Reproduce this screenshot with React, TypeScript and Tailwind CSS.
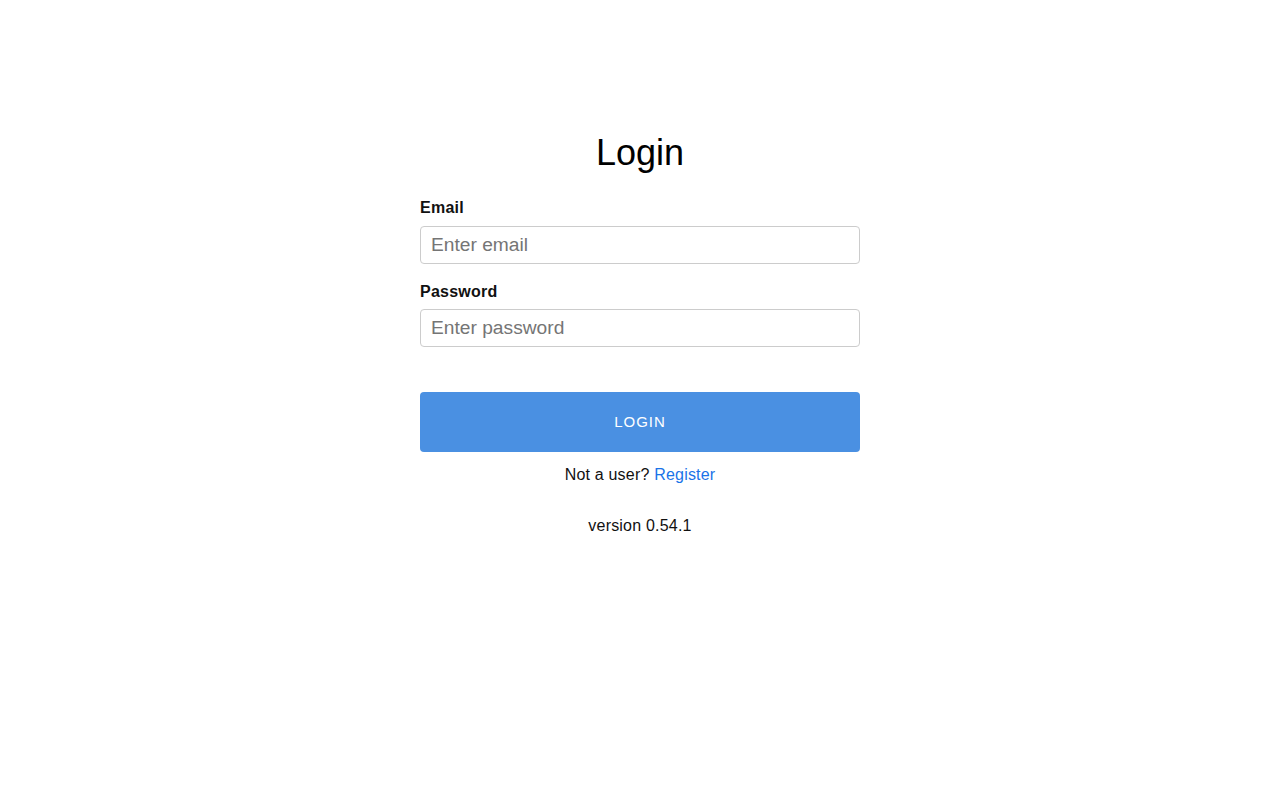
import React from 'react';

const App: React.FC = () => {
  return (
    <div className="min-h-screen bg-white font-['Liberation_Sans',Arial,sans-serif] text-black">
      <div className="mx-auto w-[440px] pt-[131px]">
        <h1 className="text-center text-[36px] leading-[43px] font-normal">Login</h1>

        <form className="mt-[21px] flex flex-col" onSubmit={(e) => e.preventDefault()}>
          <label className="pt-[1px] text-[16px] leading-[24px] font-bold tracking-[0.25px] text-[#111]">Email</label>
          <input
            type="email"
            placeholder="Enter email"
            className="mt-[6px] h-[38px] w-full rounded-[4px] border border-[#ccc] px-[10px] text-[19.2px] placeholder:text-[#757575] outline-none"
          />

          <label className="mt-[16px] text-[16px] leading-[24px] font-bold tracking-[0.25px] text-[#111]">Password</label>
          <input
            type="password"
            placeholder="Enter password"
            className="mt-[5px] h-[38px] w-full rounded-[4px] border border-[#ccc] px-[10px] text-[19.2px] placeholder:text-[#757575] outline-none"
          />

          <button
            type="submit"
            className="mt-[45px] h-[60px] w-full rounded-[4px] bg-[#4a90e2] text-[15px] tracking-[1px] text-white"
          >
            LOGIN
          </button>
        </form>

        <p className="mt-[11px] text-center text-[16px] leading-[24px] tracking-[0.2px] text-[#111]">
          Not a user? <a href="#" className="text-[#1a73e8]">Register</a>
        </p>

        <p className="mt-[27px] text-center text-[16px] leading-[24px] tracking-[0.2px] text-[#111]">version 0.54.1</p>
      </div>
    </div>
  );
};

export default App;
